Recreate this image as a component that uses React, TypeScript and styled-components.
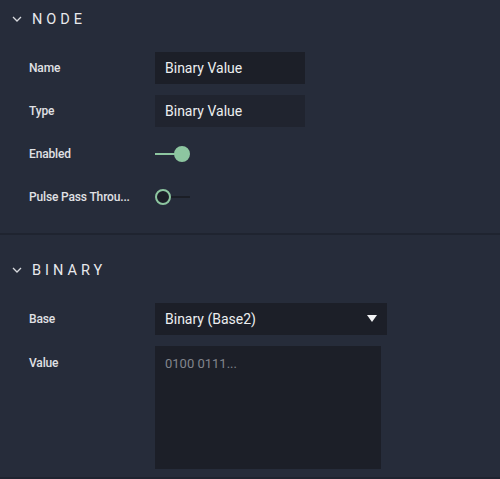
import React from "react";
import styled, { createGlobalStyle } from "styled-components";

const Global = createGlobalStyle`
  html, body { margin: 0; padding: 0; background: #262c3a; }
  body { font-family: Roboto, "Liberation Sans", sans-serif; }
`;

const Panel = styled.div`
  width: 500px;
  height: 479px;
  background: #262c3a;
  display: flex;
  flex-direction: column;
  overflow: hidden;
`;

const Section = styled.section<{ $top: number }>`
  padding-top: ${(p) => p.$top}px;
  padding-bottom: ${(p) => (p.$top ? 8 : 15)}px;
  border-bottom: 2px solid #1f2430;
`;

const Header = styled.div`
  height: 38px;
  display: flex;
  align-items: center;
  padding-left: 12px;
  gap: 10px;
  color: #e8e9ec;
  font-size: 14.5px;
  font-weight: 400;
  letter-spacing: 4px;
  margin-bottom: 8px;
`;

const Row = styled.div<{ $top?: boolean }>`
  display: grid;
  grid-template-columns: 126px 1fr;
  align-items: ${(p) => (p.$top ? "start" : "center")};
  min-height: 43px;
  padding-left: 29px;
  padding-top: ${(p) => (p.$top ? 6 : 0)}px;
`;

const Label = styled.div<{ $offset?: number }>`
  color: #e0e1e5;
  font-size: 12px;
  font-weight: 500;
  letter-spacing: -0.15px;
  padding-top: ${(p) => p.$offset || 0}px;
  white-space: nowrap;
`;

const Field = styled.div<{ $w: number; $bg: string }>`
  width: ${(p) => p.$w}px;
  height: 32px;
  box-sizing: border-box;
  background: ${(p) => p.$bg};
  color: #eceef0;
  font-size: 14px;
  padding: 0 10px;
  display: flex;
  align-items: center;
  justify-content: space-between;
`;

const Area = styled.div`
  width: 226px;
  height: 123px;
  box-sizing: border-box;
  background: #1c1f28;
  color: #82858d;
  font-size: 13px;
  padding: 10px 10px;
`;

const Toggle = styled.div<{ $on: boolean }>`
  position: relative;
  width: 36px;
  height: 16px;
  display: flex;
  align-items: center;
  &::before {
    content: "";
    position: absolute;
    left: ${(p) => (p.$on ? 0 : 14)}px;
    width: ${(p) => (p.$on ? 22 : 21)}px;
    height: 2px;
    background: ${(p) => (p.$on ? "#8dc6a0" : "#1b1e26")};
  }
  &::after {
    content: "";
    position: absolute;
    left: ${(p) => (p.$on ? 19 : 0)}px;
    width: 16px;
    height: 16px;
    box-sizing: border-box;
    border-radius: 50%;
    background: ${(p) => (p.$on ? "#8dc6a0" : "#1c1f28")};
    border: 2px solid #8dc6a0;
  }
`;

const Chevron = () => (
  <svg width="10" height="6" viewBox="0 0 10 6" fill="none">
    <path d="M1 1 L5 5 L9 1" stroke="#d8dade" strokeWidth="1.3" />
  </svg>
);

const Caret = () => (
  <svg width="10" height="7" viewBox="0 0 10 7">
    <path d="M0 0 H10 L5 7 Z" fill="#f2f3f5" />
  </svg>
);

export default function App() {
  return (
    <Panel>
      <Global />
      <Section $top={0}>
        <Header>
          <Chevron />
          NODE
        </Header>
        <Row>
          <Label>Name</Label>
          <Field $w={150} $bg="#1c1f28">Binary Value</Field>
        </Row>
        <Row>
          <Label>Type</Label>
          <Field $w={150} $bg="#20242f">Binary Value</Field>
        </Row>
        <Row>
          <Label>Enabled</Label>
          <Toggle $on />
        </Row>
        <Row>
          <Label>Pulse Pass Throu...</Label>
          <Toggle $on={false} />
        </Row>
      </Section>
      <Section $top={16}>
        <Header>
          <Chevron />
          BINARY
        </Header>
        <Row>
          <Label>Base</Label>
          <Field $w={232} $bg="#1c1f28">
            Binary (Base2)
            <Caret />
          </Field>
        </Row>
        <Row $top>
          <Label $offset={10}>Value</Label>
          <Area>0100 0111...</Area>
        </Row>
      </Section>
    </Panel>
  );
}
